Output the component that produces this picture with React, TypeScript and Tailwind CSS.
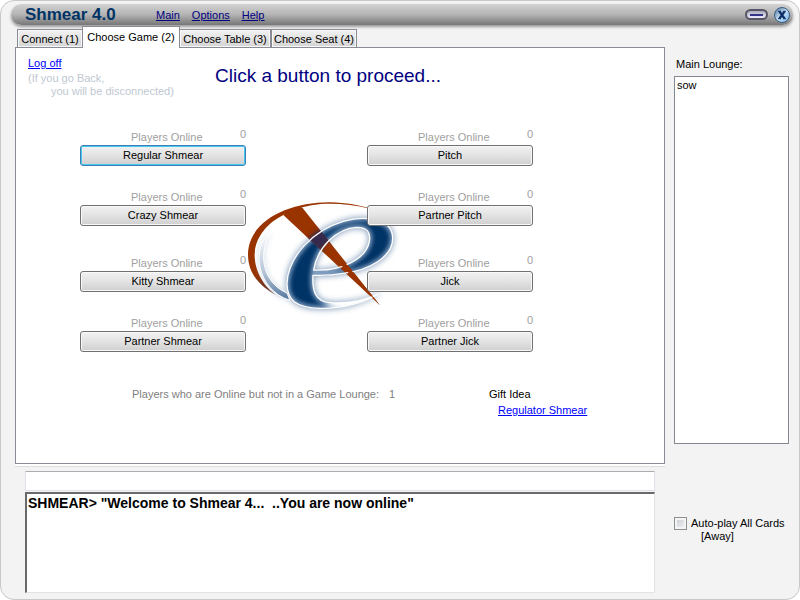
import React from 'react';

const tabs = ['Connect (1)', 'Choose Game (2)', 'Choose Table (3)', 'Choose Seat (4)'];

const gameGroups = [
  [
    ['Regular Shmear', 'Pitch'],
    ['Crazy Shmear', 'Partner Pitch'],
  ],
  [
    ['Kitty Shmear', 'Jick'],
    ['Partner Shmear', 'Partner Jick'],
  ],
];

const E_OUTLINE =
  'M446 312 C400 338 340 356 270 355 C200 354 170 330 171 280 C174 200 250 120 340 94 C420 72 488 92 488 145 C488 200 420 240 340 250 C300 257 275 257 249 256 C246 300 255 335 300 338 C350 342 400 332 446 312 Z';
const E_HOLE = 'M251 240 C262 172 320 115 380 112 C415 112 422 130 418 155 C408 208 330 245 251 240 Z';
const WEDGE = 'M160 75 L190 56 L216 52 L450 346 Z';

function Logo() {
  return (
    <svg viewBox="0 0 540 390" className="absolute left-[214px] top-[142px] h-[130px] w-[180px]" aria-hidden="true">
      <defs>
        <filter id="glow" x="-20%" y="-20%" width="140%" height="140%">
          <feGaussianBlur stdDeviation="10" />
        </filter>
        <filter id="edge" x="-20%" y="-20%" width="140%" height="140%">
          <feGaussianBlur stdDeviation="6" />
        </filter>
        <linearGradient id="swoosh" x1="0" y1="0" x2="0" y2="1">
          <stop offset="0" stopColor="#fff" />
          <stop offset="0.6" stopColor="#b5c4d6" />
          <stop offset="1" stopColor="#51749c" />
        </linearGradient>
        <linearGradient id="arc" x1="0" y1="0" x2="0" y2="1">
          <stop offset="0.75" stopColor="#993300" />
          <stop offset="1" stopColor="#552c28" />
        </linearGradient>
        <clipPath id="letter">
          <path d={`${E_OUTLINE} ${E_HOLE}`} clipRule="evenodd" />
        </clipPath>
        <clipPath id="wedge">
          <path d={WEDGE} />
        </clipPath>
      </defs>
      <path
        d="M150 322 C88 290 53 250 54 190 C58 90 180 36 300 37 C350 38 390 46 420 56 C380 46 340 41 300 41 C260 41 235 47 216 52 L160 75 C100 105 72 155 74 200 C76 250 108 300 150 322 Z"
        fill="url(#arc)"
      />
      <path d={`${E_OUTLINE} ${E_HOLE}`} fill="#5f80a6" stroke="#5f80a6" strokeWidth="6" fillRule="evenodd" filter="url(#glow)" opacity="0.8" />
      <path d="M126 124 C60 165 78 300 180 331 L171 309 C90 275 85 175 126 124 Z" fill="#8fa8c4" filter="url(#glow)" opacity="0.5" />
      <path d="M126 124 C60 165 78 300 180 331 L171 309 C90 275 85 175 126 124 Z" fill="url(#swoosh)" stroke="#fff" strokeWidth="3" />
      <g clipPath="url(#letter)">
        <rect width="540" height="390" fill="#003366" />
        <path d={`${E_OUTLINE} ${E_HOLE}`} fill="none" stroke="#86a3c4" strokeWidth="15" filter="url(#edge)" />
        <ellipse cx="410" cy="340" rx="120" ry="28" fill="#fff" filter="url(#glow)" />
      </g>
      <path d={WEDGE} fill="#993300" />
      <g clipPath="url(#wedge)">
        <path d="M222 160 C252 125 285 106 330 92 L330 140 C295 150 270 180 258 206 Z" fill="#352b4b" filter="url(#edge)" />
      </g>
      <path d={E_OUTLINE} fill="none" stroke="#fff" strokeWidth="4" strokeDasharray="none" />
      <path d={E_HOLE} fill="none" stroke="#fff" strokeWidth="4" />
      <path d="M283 174 L296 158 L450 346 Z" fill="#993300" />
    </svg>
  );
}

function GameChoice({ name, focused }: { name: string; focused: boolean }) {
  return (
    <div className="w-[166px]">
      <div className="flex h-[18px] items-start leading-[14px] text-[#a0a0a0]">
        <span className="ml-[51px] pt-[3px]">Players Online</span>
        <span className="ml-auto">0</span>
      </div>
      <button
        type="button"
        className={
          focused
            ? 'block h-[21px] w-full rounded-[3px] border border-[#3c7fb1] bg-linear-to-b from-[#f2f2f2] via-[#e3e3e3] to-[#cfcfcf] pb-[2px] text-[11px] leading-[16px] inset-ring inset-ring-[#48c9f4]'
            : 'block h-[21px] w-full rounded-[3px] border border-[#707070] bg-linear-to-b from-[#f2f2f2] via-[#e3e3e3] to-[#cfcfcf] pb-[2px] text-[11px] leading-[16px] inset-ring inset-ring-[#f8f8f8]'
        }
      >
        {name}
      </button>
    </div>
  );
}

function TitleBar() {
  return (
    <header className="mx-[6px] ml-[10px] flex h-[21px] items-center rounded-full bg-linear-to-b from-[#d2d2d2] via-[#b4b4b4] to-[#777777] pl-[14px] pr-[3px] shadow-[0_2px_3px_#999999]">
      <h1 className="w-[131px] text-[17px] font-bold leading-[20px] text-[#003366]">Shmear 4.0</h1>
      <nav className="flex gap-3 text-[11px] leading-[14px] text-[#000080] underline">
        <a href="#main">Main</a>
        <a href="#options">Options</a>
        <a href="#help">Help</a>
      </nav>
      <div className="ml-auto flex items-center gap-[6px]">
        <button type="button" aria-label="Minimize" className="flex h-[11px] w-[23px] items-center justify-center rounded-full border-2 border-[#555566] bg-linear-to-b from-[#aaaabb] to-[#eeeeff]">
          <span className="h-[2px] w-[13px] bg-[#333388]" />
        </button>
        <button type="button" aria-label="Close" className="h-4 w-4 rounded-full border border-[#355c86] bg-linear-to-br from-[#55789f] via-[#c5dcf2] to-[#75b7ee]">
          <svg viewBox="0 0 14 14" className="h-[14px] w-[14px]" aria-hidden="true">
            <path d="M4.5 3.5 L9.5 10.5 M9.5 3.5 L4.5 10.5" stroke="#0b2f66" strokeWidth="2.2" />
            <path d="M3 3.3 H6 M8.5 3.3 H11 M3 10.7 H6 M8.5 10.7 H11" stroke="#0b2f66" />
          </svg>
        </button>
      </div>
    </header>
  );
}

export default function App() {
  return (
    <div className="min-h-screen bg-white font-['Liberation_Sans',Arial,sans-serif] text-[11px] leading-[13px] text-black">
      <div className="flex min-h-screen flex-col rounded-[14px] border border-[#c8c8c8] bg-[#f3f3f3] pt-[3px] pb-[6px]">
        <TitleBar />
        <div className="flex flex-1 pl-[14px] pr-[10px]">
          <main className="flex flex-1 flex-col">
            <div role="tablist" className="flex h-[22px] items-end pl-[2px]">
              {tabs.map((tab, i) => (
                <button
                  key={tab}
                  type="button"
                  role="tab"
                  aria-selected={i === 1}
                  className={
                    i === 1
                      ? 'relative z-10 -mx-px -mb-px h-[22px] w-[98px] border border-b-0 border-[#898c95] bg-white'
                      : 'flex h-[18px] items-center justify-center border border-b-0 border-[#898c95] bg-linear-to-b from-[#f2f2f2] to-[#d4d4d4] pt-[2px] inset-ring inset-ring-[#f8f8f8] first:w-[66px] last:w-[86px] nth-3:w-[92px]'
                  }
                >
                  <span className="whitespace-nowrap">{tab}</span>
                </button>
              ))}
            </div>
            <section className="relative h-[417px] border border-[#898c95] bg-white">
              <Logo />
              <div className="relative">
                <div className="flex h-[78px] pl-3 pt-[9px]">
                  <div className="w-[187px] text-[#c0c8d2]">
                    <a href="#logoff" className="mb-[2px] block text-[#0000ff] underline">Log off</a>
                    <p>(If you go Back,</p>
                    <p className="pl-[23px]">you will be disconnected)</p>
                  </div>
                  <h2 className="pt-[7px] text-[19px] leading-[24px] text-[#000080]">Click a button to proceed...</h2>
                </div>
                <div className="flex flex-col gap-[27px] pl-[64px] pt-px">
                  {gameGroups.map((group, g) => (
                    <div key={g} className="flex flex-col gap-[21px]">
                      {group.map(([left, right]) => (
                        <div key={left} className="flex gap-[121px]">
                          <GameChoice name={left} focused={left === 'Regular Shmear'} />
                          <GameChoice name={right} focused={false} />
                        </div>
                      ))}
                    </div>
                  ))}
                </div>
                <div className="flex pl-[116px] pt-[36px]">
                  <p className="w-[357px] text-[#808080]">
                    Players who are Online but not in a Game Lounge:<span className="ml-[10px]">1</span>
                  </p>
                  <div>
                    <p>Gift Idea</p>
                    <a href="#regulator" className="mt-[3px] ml-[9px] block text-[#0000ff] underline">Regulator Shmear</a>
                  </div>
                </div>
              </div>
            </section>
            <div className="h-[3px] border-b border-[#dddddd] bg-white" />
            <div className="flex flex-1 flex-col gap-px pl-[10px] pr-[10px] pt-1">
              <input aria-label="Chat message" className="h-[20px] border border-[#e2e3ea] border-t-[#abadb3] bg-white px-1 outline-none" />
              <textarea
                aria-label="Chat log"
                readOnly
                className="min-h-[100px] flex-1 resize-none border-2 border-r border-b border-[#e3e3e3] border-t-[#696969] border-l-[#696969] bg-white px-px pt-px text-[14px] font-bold leading-[16px] outline-none"
                defaultValue={'SHMEAR> "Welcome to Shmear 4...  ..You are now online"'}
              />
            </div>
          </main>
          <aside className="ml-[9px] flex w-[115px] flex-col">
            <h2 id="lounge" className="mt-[33px] pl-[2px]">Main Lounge:</h2>
            <ul aria-labelledby="lounge" className="mt-[5px] h-[368px] border border-[#828790] bg-white px-[2px] py-[2px]">
              <li>sow</li>
            </ul>
            <label className="mt-[73px] flex items-start gap-1 whitespace-nowrap">
              <input type="checkbox" className="h-[13px] w-[13px] shrink-0 appearance-none border border-[#8e8f8f] bg-linear-to-br from-[#c5c9d0] to-[#f6f6f6] inset-ring-2 inset-ring-[#f4f4f4]" />
              <span>
                Auto-play All Cards
                <span className="block pl-[10px]">[Away]</span>
              </span>
            </label>
          </aside>
        </div>
      </div>
    </div>
  );
}
